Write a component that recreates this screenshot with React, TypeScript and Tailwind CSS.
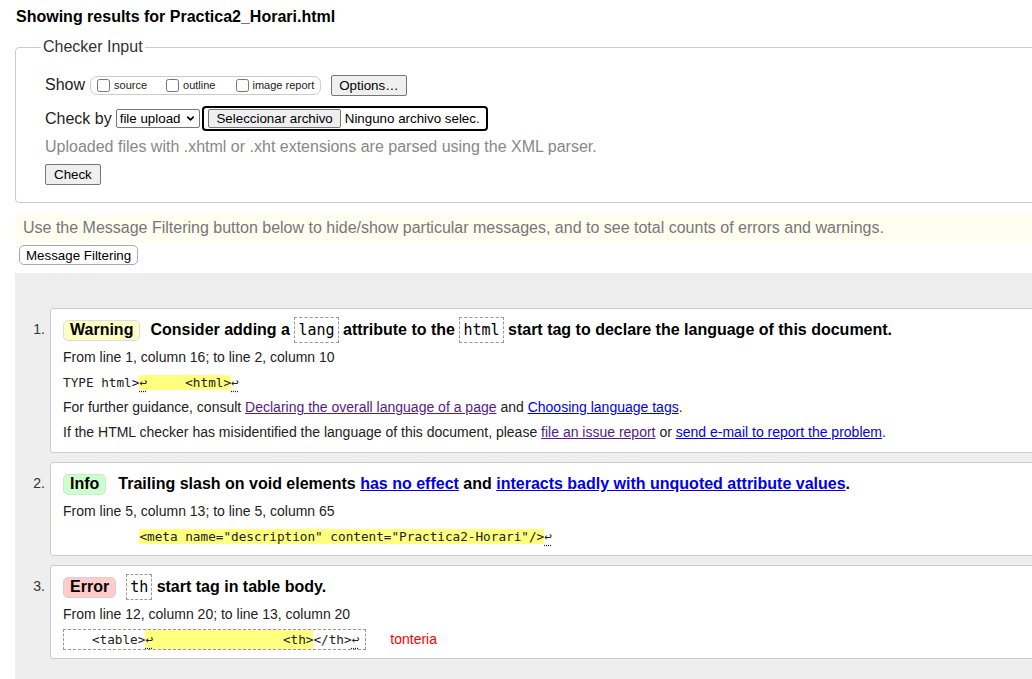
import React from "react";
import { ChevronDown } from "lucide-react";

const mono = "font-['DejaVu_Sans_Mono',monospace]";

function Ret() {
  return <span className="underline decoration-dotted underline-offset-[4px]">↩</span>;
}

function Badge({ label, tone }: { label: string; tone: string }) {
  return (
    <span
      className={`inline-flex items-center h-[21px] px-[6px] rounded-[5px] border ${tone}`}
    >
      {label}
    </span>
  );
}

function Tag({ children }: { children: React.ReactNode }) {
  return (
    <code
      className={`border border-dashed border-[#999] px-[3px] py-[3px] font-normal text-[15px] ${mono}`}
    >
      {children}
    </code>
  );
}

function Message({ n, pb, children }: { n: number; pb: string; children: React.ReactNode }) {
  return (
    <li className="flex">
      <div className="w-[35px] shrink-0 text-right pr-[5px] pt-[14px] text-[14px] leading-[15px] text-[#333]">
        {n}.
      </div>
      <div className={`flex-1 bg-white border border-[#ccc] rounded-[3px] pl-[12px] pt-[9px] ${pb}`}>
        {children}
      </div>
    </li>
  );
}

export default function App() {
  return (
    <div className="w-[1032px] h-[679px] overflow-hidden bg-white text-[#222] font-['Liberation_Sans',Arial,sans-serif]">
      <div className="w-[1100px]">
        <h2 className="pl-[16px] pt-[8px] text-[16px] leading-[18px] font-bold text-black">
          Showing results for Practica2_Horari.html
        </h2>

        <fieldset className="ml-[15px] mt-[12px] border border-[#ccc] rounded-[4px] px-[28px] pb-[17px]">
          <legend className="-ml-[3px] px-[2px] text-[16px] leading-[18px] text-[#333]">
            Checker Input
          </legend>

          <div className="mt-[18px] flex items-center h-[22px] text-[16px]">
            <span className="ml-[1px] mr-[5px]">Show</span>
            <div className="flex items-center h-[19px] border border-[#ccc] rounded-[7px] pl-[6px] pr-[6px] text-[11px]">
              <input type="checkbox" className="w-[13px] h-[13px] m-0" />
              <span className="ml-[4px]">source</span>
              <input type="checkbox" className="w-[13px] h-[13px] m-0 ml-[19px]" />
              <span className="ml-[4px]">outline</span>
              <input type="checkbox" className="w-[13px] h-[13px] m-0 ml-[21px]" />
              <span className="ml-[3px]">image report</span>
            </div>
            <button className="ml-[10px] h-[21px] px-[7px] border border-[#767676] bg-[#efefef] rounded-[2px] text-[13.33px] text-black">
              Options…
            </button>
          </div>

          <div className="mt-[10px] flex items-center h-[25px] text-[16px]">
            <span className="ml-[1px] mr-[4px]">Check by</span>
            <div className="flex items-center h-[19px] border border-[#767676] rounded-[2px] pl-[3px] pr-[3px] text-[13.33px] text-black gap-[5px]">
              file upload
              <ChevronDown size={11} strokeWidth={3.5} />
            </div>
            <div className="ml-[2px] flex items-center h-[25px] border-2 border-black rounded-[4px] pl-[4px] pr-[6px] text-[13.33px] text-black">
              <span className="h-[19px] flex items-center px-[7px] border border-[#767676] bg-[#efefef] rounded-[2px]">
                Seleccionar archivo
              </span>
              <span className="ml-[4px]">Ninguno archivo selec.</span>
            </div>
          </div>

          <p className="mt-[4px] leading-[24px] text-[16px] text-[#888] ml-[1px]">
            Uploaded files with .xhtml or .xht extensions are parsed using the XML parser.
          </p>

          <div className="mt-[5px] flex">
            <button className="ml-[1px] h-[21px] px-[8px] border border-[#767676] bg-[#efefef] rounded-[2px] text-[13.33px] text-black">
              Check
            </button>
          </div>
        </fieldset>

        <div className="ml-[15px] mt-[11px] h-[28px] flex items-center bg-[#fffdf0] pl-[8px] text-[16px] text-[#777]">
          Use the Message Filtering button below to hide/show particular messages, and to see total counts of errors and warnings.
        </div>

        <div className="flex mt-[3px] ml-[19px]">
          <button className="h-[20px] px-[6px] border border-[#aaa] bg-white rounded-[5px] text-[13.33px] text-black">
            Message Filtering
          </button>
        </div>

        <ol className="ml-[15px] mt-[8px] bg-[#eee] pt-[35px] pb-[40px] flex flex-col gap-[9px]">
          <Message n={1} pb="pb-[7px]">
            <div className="flex items-center h-[24px] text-[16px] font-bold text-black">
              <Badge label="Warning" tone="bg-[#ffffc4] border-[#ddd]" />
              <span className="ml-[10px]">
                Consider adding a <Tag>lang</Tag> attribute to the <Tag>html</Tag> start tag to declare the language of this document.
              </span>
            </div>
            <p className="mt-[3px] leading-[25px] text-[14px]">From line 1, column 16; to line 2, column 10</p>
            <div className={`leading-[25px] whitespace-pre text-[12.7px] ${mono}`}>
              TYPE html&gt;<span className="bg-[#ffff80]"><Ret />     &lt;html&gt;</span><Ret />
            </div>
            <p className="leading-[25px] text-[14px]">
              For further guidance, consult{" "}
              <a className="underline text-[#551a8b]">Declaring the overall language of a page</a> and{" "}
              <a className="underline text-[#0000ee]">Choosing language tags</a>.
            </p>
            <p className="leading-[25px] text-[14px]">
              If the HTML checker has misidentified the language of this document, please{" "}
              <a className="underline text-[#551a8b]">file an issue report</a> or{" "}
              <a className="underline text-[#0000ee]">send e-mail to report the problem</a>.
            </p>
          </Message>

          <Message n={2} pb="pb-[6px]">
            <div className="flex items-center h-[24px] text-[16px] font-bold text-black">
              <Badge label="Info" tone="bg-[#ccffcc] border-[#cde8cd]" />
              <span className="ml-[12px]">
                Trailing slash on void elements <a className="underline text-[#0000ee]">has no effect</a> and{" "}
                <a className="underline text-[#0000ee]">interacts badly with unquoted attribute values</a>.
              </span>
            </div>
            <p className="mt-[3px] leading-[25px] text-[14px]">From line 5, column 13; to line 5, column 65</p>
            <div className={`leading-[25px] whitespace-pre text-[12.7px] ${mono}`}>
              {"          "}
              <span className="bg-[#ffff80]">&lt;meta name="description" content="Practica2-Horari"/&gt;</span>
              <Ret />
            </div>
          </Message>

          <Message n={3} pb="pb-[6px]">
            <div className="flex items-center h-[24px] text-[16px] font-bold text-black">
              <Badge label="Error" tone="bg-[#ffcccc] border-[#e8caca]" />
              <span className="ml-[10px]">
                <Tag>th</Tag> start tag in table body.
              </span>
            </div>
            <p className="mt-[3px] leading-[25px] text-[14px]">From line 12, column 20; to line 13, column 20</p>
            <div className="h-[25px] flex items-center">
              <span
                className={`h-[21px] flex items-center border border-dashed border-[#999] pl-[5px] pr-[6px] whitespace-pre text-[12.7px] ${mono}`}
              >
                {"   <table>"}
                <span className="bg-[#ffff80]"><Ret />{"                 <th>"}</span>
                &lt;/th&gt;<Ret />
              </span>
              <span className="ml-[24px] text-[14px] text-[#f00]">tonteria</span>
            </div>
          </Message>
        </ol>
      </div>
    </div>
  );
}
